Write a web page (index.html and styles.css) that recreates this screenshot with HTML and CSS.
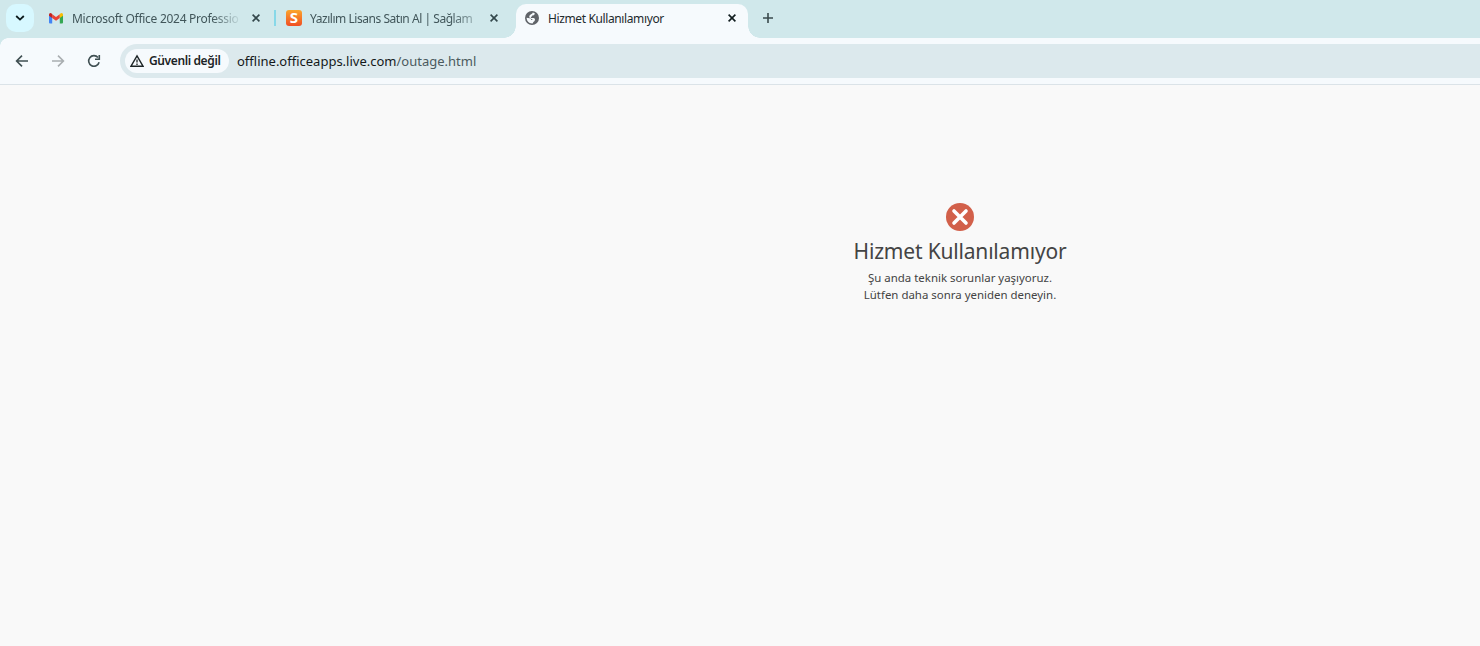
FILE: index.html
```html
<!DOCTYPE html>
<html lang="tr">
<head>
  <meta charset="UTF-8">
  <meta name="viewport" content="width=device-width, initial-scale=1.0">
  <title>Hizmet Kullanılamıyor</title>
  <link rel="stylesheet" href="styles.css">
</head>
<body>
  <!-- Tabs -->
  <div class="tab-strip">
    <button class="tab-search" aria-label="Sekmelerde ara">
      <svg width="10" height="6" viewBox="0 0 10 6"><path d="M1.2 1 L5 4.6 L8.8 1" fill="none" stroke="#0c1a1c" stroke-width="1.8"/></svg>
    </button>

    <div class="tab tab-mail">
      <svg class="favicon" width="16" height="16" viewBox="0 0 16 16">
        <path d="M1 4.2 L4.2 6.6 V13.4 H2 Q1 13.4 1 12.4 Z" fill="#4285f4"/>
        <path d="M15 4.2 L11.8 6.6 V13.4 H14 Q15 13.4 15 12.4 Z" fill="#34a853"/>
        <path d="M4.2 4.2 L8 7 L11.8 4.2 V8 L8 10.8 L4.2 8 Z" fill="#ea4335"/>
        <path d="M1 4.6 Q1 2.9 2.4 2.9 Q3 2.9 4.2 4 V8 L1 5.7 Z" fill="#c5221f"/>
        <path d="M15 4.6 Q15 2.9 13.6 2.9 Q13 2.9 11.8 4 V8 L15 5.7 Z" fill="#fbbc04"/>
      </svg>
      <span class="tab-title title-mail">Microsoft Office 2024 Professio</span>
      <svg class="tab-close" width="8" height="8" viewBox="0 0 8 8"><path d="M0.6 0.6 L7.4 7.4 M7.4 0.6 L0.6 7.4"/></svg>
    </div>

    <div class="tab tab-shop">
      <span class="shop-icon">S</span>
      <span class="tab-title title-shop">Yazılım Lisans Satın Al | Sağlam</span>
      <svg class="tab-close" width="8" height="8" viewBox="0 0 8 8"><path d="M0.6 0.6 L7.4 7.4 M7.4 0.6 L0.6 7.4"/></svg>
    </div>

    <div class="tab tab-active">
      <svg class="favicon" width="16" height="16" viewBox="0 0 16 16">
        <circle cx="8" cy="8" r="7" fill="#5f6368"/>
        <path d="M8.8 2.6 L10.8 3.2 Q10.8 5.2 9.2 5.4 L8.2 5.6 Q8 7 6.8 7.2 L7 8 H9.6 Q11 8.2 11 9.6 Q11 11.6 9.4 12 L8.6 13.4 Q4.6 13.4 3.2 10.4 Q2.6 9 2.6 7.8 L5.6 8.2 Q7.4 8.6 7.2 10 H8.6 Q8.8 9.4 7.4 9 Q5.2 8.6 5.2 6.6 Q5.4 4.8 7 4.2 Q8.6 3.8 8.8 2.6 Z" fill="#f6fafd"/>
      </svg>
      <span class="tab-title title-outage">Hizmet Kullanılamıyor</span>
      <svg class="tab-close" width="8" height="8" viewBox="0 0 8 8"><path d="M0.6 0.6 L7.4 7.4 M7.4 0.6 L0.6 7.4"/></svg>
    </div>

    <svg class="new-tab" width="10" height="10" viewBox="0 0 10 10"><path d="M5 0 V10 M0 5 H10" stroke="#3a4a4d" stroke-width="1.6"/></svg>
  </div>

  <!-- Toolbar -->
  <div class="toolbar">
    <svg class="nav-icon" width="16" height="16" viewBox="0 0 16 16"><path d="M14 8 H3 M8 2.6 L2.6 8 L8 13.4" stroke="#3f4f52"/></svg>
    <svg class="nav-icon" width="16" height="16" viewBox="0 0 16 16"><path d="M2 8 H13 M8 2.6 L13.4 8 L8 13.4" stroke="#a9aeb1"/></svg>
    <svg class="nav-icon" width="16" height="16" viewBox="0 0 16 16">
      <path d="M13.1 9.3 A5.3 5.3 0 1 1 12 4.5" stroke="#3f4f52"/>
      <path d="M13.3 2 V6.3 H9" stroke="#3f4f52"/>
    </svg>
    <div class="address-bar">
      <div class="security-chip">
        <svg width="14" height="14" viewBox="0 0 14 14">
          <path d="M7 1.8 L13 12.2 H1 Z" fill="none" stroke="#1c2426" stroke-width="1.4"/>
          <path d="M7 5.4 V8.6 M7 9.6 V11" stroke="#1c2426" stroke-width="1.3"/>
        </svg>
        <span class="chip-text">Güvenli değil</span>
      </div>
      <span class="url">offline.officeapps.live.com<span class="url-path">/outage.html</span></span>
    </div>
  </div>

  <!-- Page -->
  <main class="page">
    <div class="message">
      <svg width="28" height="28" viewBox="0 0 28 28">
        <circle cx="14" cy="14" r="14" fill="#d2604a"/>
        <path d="M8 8 L20 20 M20 8 L8 20" stroke="#fff" stroke-width="3.6" stroke-linecap="round"/>
      </svg>
      <h1 class="heading">Hizmet Kullanılamıyor</h1>
      <p class="detail">Şu anda teknik sorunlar yaşıyoruz.</p>
      <p class="detail">Lütfen daha sonra yeniden deneyin.</p>
    </div>
  </main>
</body>
</html>
```
FILE: styles.css
```css
body {
  margin: 0;
  height: 646px;
  display: flex;
  flex-direction: column;
  overflow: hidden;
  background: #f9f9f9;
  font-family: "Noto Sans", sans-serif;
}

svg {
  display: block;
  flex: none;
}

/* Tabs */
.tab-strip {
  box-sizing: border-box;
  height: 38px;
  flex: none;
  display: flex;
  align-items: flex-start;
  padding: 4px 0 0 6px;
  background: #d0e8eb;
}

.tab-search {
  width: 28px;
  height: 28px;
  padding: 0;
  margin-right: 6px;
  border: none;
  border-radius: 10px;
  background: #d7f8ff;
  display: flex;
  align-items: center;
  justify-content: center;
}

.tab {
  box-sizing: border-box;
  height: 28px;
  display: flex;
  align-items: center;
  flex: none;
  color: #41565a;
}

.tab-mail {
  width: 236px;
  padding: 0 16px 0 8px;
}

.tab-shop {
  width: 240px;
  padding: 0 18px 0 10px;
  position: relative;
}

/* line between two inactive tabs */
.tab-shop::before {
  content: "";
  position: absolute;
  left: -2px;
  top: 6px;
  width: 2px;
  height: 16px;
  background: #87d8e8;
}

.tab-active {
  width: 232px;
  height: 34px;
  padding: 0 12px 6px 8px;
  border-radius: 10px 10px 0 0;
  background: #f6fafd;
  color: #1d2b2e;
  position: relative;
}

/* curved feet of the active tab */
.tab-active::before,
.tab-active::after {
  content: "";
  position: absolute;
  bottom: 0;
  width: 12px;
  height: 12px;
}

.tab-active::before {
  left: -12px;
  background: radial-gradient(circle at 0 0, transparent 11.5px, #f6fafd 12px);
}

.tab-active::after {
  right: -12px;
  background: radial-gradient(circle at 100% 0, transparent 11.5px, #f6fafd 12px);
}

.tab-title {
  width: 168px;
  margin-left: 8px;
  padding-top: 2px;
  white-space: nowrap;
  font-size: 12px;
  line-height: 18px;
}

.title-mail {
  letter-spacing: -0.28px;
  -webkit-mask-image: linear-gradient(to right, #000 140px, transparent 170px);
  mask-image: linear-gradient(to right, #000 140px, transparent 170px);
}

.title-shop {
  letter-spacing: -0.46px;
  -webkit-mask-image: linear-gradient(to right, #000 140px, transparent 180px);
  mask-image: linear-gradient(to right, #000 140px, transparent 180px);
}

.title-outage {
  letter-spacing: -0.38px;
}

.tab-close {
  margin-left: auto;
  fill: none;
  stroke: #33474b;
  stroke-width: 1.6;
}

.tab-active .tab-close {
  stroke: #101c1e;
}

.shop-icon {
  width: 16px;
  height: 16px;
  flex: none;
  border-radius: 3px;
  background: linear-gradient(#fba52c, #f04e23);
  font: bold 15px/15px "Open Sans", sans-serif;
  text-align: center;
  color: #fff;
}

.new-tab {
  margin: 9px 0 0 15px;
}

/* Toolbar */
.toolbar {
  box-sizing: border-box;
  height: 47px;
  flex: none;
  display: flex;
  align-items: center;
  gap: 20px;
  padding-left: 14px;
  border-bottom: 1px solid #dbe3e8;
  background: #f6fafd;
}

/* strip colour behind the rounded corner */
.toolbar::before {
  content: "";
  position: absolute;
  left: 0;
  top: 38px;
  width: 8px;
  height: 8px;
  background: radial-gradient(circle at 100% 100%, transparent 7.5px, #d0e8eb 8px);
}

.nav-icon {
  fill: none;
  stroke-width: 1.6;
}

.address-bar {
  box-sizing: border-box;
  height: 34px;
  flex: 1;
  margin-left: -2px;
  padding-left: 5px;
  display: flex;
  align-items: center;
  gap: 8px;
  border-radius: 17px 0 0 17px;
  background: #dce9ed;
}

.security-chip {
  box-sizing: border-box;
  width: 104px;
  height: 24px;
  padding-left: 5px;
  display: flex;
  align-items: center;
  gap: 5px;
  border-radius: 12px;
  background: #f6fafd;
}

.chip-text {
  font-size: 12px;
  font-weight: 600;
  line-height: 16px;
  letter-spacing: -0.38px;
  white-space: nowrap;
  color: #1c2426;
}

.url {
  font-size: 13px;
  white-space: nowrap;
  color: #14191a;
}

.url-path {
  color: #4b5a5e;
}

/* Page */
.page {
  flex: 1;
  padding: 118px 0 0 440px;
}

.message {
  display: flex;
  flex-direction: column;
  align-items: center;
  color: #444;
  white-space: nowrap;
}

.heading {
  margin: 4px 0 2px;
  font-size: 21px;
  font-weight: 400;
  line-height: 32px;
  letter-spacing: -0.18px;
}

.detail {
  margin: 0;
  font-size: 11.45px;
  line-height: 17px;
}
```
